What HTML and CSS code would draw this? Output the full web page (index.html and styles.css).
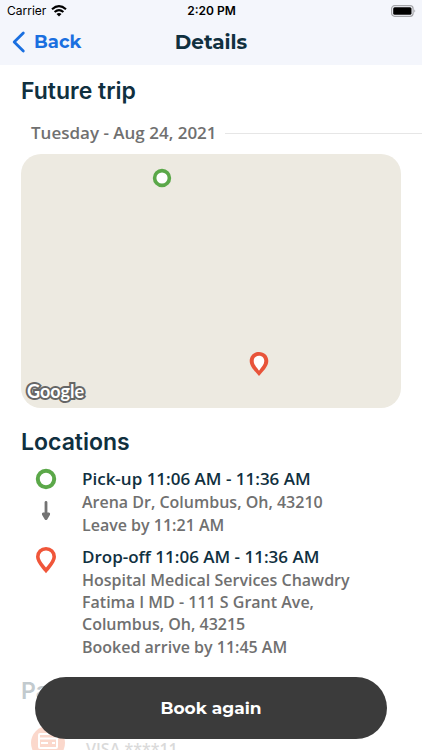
FILE: index.html
```html
<!DOCTYPE html>
<html lang="en">
<head>
<meta charset="utf-8">
<meta name="viewport" content="width=device-width, initial-scale=1">
<title>Details</title>
<link rel="stylesheet" href="styles.css">
</head>
<body>
<div class="app">
  <header class="top">
    <div class="status">
      <span class="carrier">Carrier
        <svg width="16" height="12" viewBox="0 0 16 12" aria-hidden="true"><path d="M1 4.3Q8-1.9 15 4.3M3.6 7Q8 3.2 12.4 7" fill="none" stroke="#000" stroke-width="2.1"/><path d="M5.5 9Q8 7 10.5 9L8 11.6Z"/></svg>
      </span>
      <time class="clock">2:20 PM</time>
      <svg class="battery" width="26" height="12" viewBox="0 0 26 12" aria-hidden="true"><rect x="1.600" y=".7" width="21.5" height="10.6" rx="3" fill="none" stroke="#a5a6aa" stroke-width="1.2"/><rect x="3.200" y="2.3" width="18.3" height="7.4" rx="1.5"/><path d="M24.500 4.2q1.5 1.8 0 3.6z" fill="#85868a"/></svg>
    </div>
    <nav class="nav">
      <a class="back" href="#">
        <svg width="14" height="22" viewBox="0 0 14 22" aria-hidden="true"><path d="M11.300 2L2.200 11l9.100 9" fill="none" stroke="#1a6fe0" stroke-width="2.8" stroke-linecap="round" stroke-linejoin="round"/></svg>
        Back</a>
      <h1 class="title">Details</h1>
    </nav>
  </header>

  <main class="content">
    <h2 class="heading">Future trip</h2>
    <div class="date">Tuesday - Aug 24, 2021</div>
    <div class="map" role="img" aria-label="Trip map">
      <svg class="pin pin-start" width="20" height="20" viewBox="0 0 20 20"><circle cx="10" cy="10" r="7.4" fill="#fff" stroke="#5ba849" stroke-width="3.6"/></svg>
      <svg class="pin pin-end" width="20" height="26" viewBox="0 0 20 26"><path d="M10 1C4.700 1 .7 4.800 .7 10c0 5.500 5 10 9.300 15 4.300-5 9.300-9.500 9.300-15C19.300 4.800 15.300 1 10 1Z" fill="#e8543a"/><path d="M10 4.800c-3.200 0-5.300 2.200-5.300 5.300 0 3.400 2.700 6 5.300 9.600 2.600-3.600 5.300-6.200 5.300-9.600 0-3.100-2.100-5.300-5.300-5.300Z" fill="#fff"/></svg>
      <span class="google">Google</span>
    </div>

    <h2 class="heading">Locations</h2>
    <ul class="stops">
      <li class="stop">
        <div class="marks">
          <svg width="22" height="22" viewBox="0 0 22 22" aria-hidden="true"><circle cx="11" cy="11" r="8.200" fill="#fff" stroke="#5ba849" stroke-width="4"/></svg>
          <svg width="10" height="20" viewBox="0 0 10 20" aria-hidden="true"><path d="M5 1.500v12" stroke="#737373" stroke-width="2.800" stroke-linecap="round"/><path d="M2 11.500h6q1.600.4 1 2.200L6.200 18.600q-1.200 1-2.400 0L1 13.700q-.6-1.800 1-2.200Z" fill="#737373"/></svg>
        </div>
        <div>
          <h3 class="stop-title">Pick-up 11:06 AM - 11:36 AM</h3>
          <p class="line">Arena Dr, Columbus, Oh, 43210</p>
          <p class="line">Leave by 11:21 AM</p>
        </div>
      </li>
      <li class="stop">
        <div class="marks">
          <svg width="22" height="28" viewBox="0 0 22 28" aria-hidden="true"><path d="M11 2.800c-4.700 0-8.200 3.300-8.200 8 0 5 4.400 8.800 8.200 13.600 3.800-4.800 8.200-8.600 8.200-13.600 0-4.700-3.500-8-8.200-8Z" fill="#fff" stroke="#f0563a" stroke-width="3.600"/></svg>
        </div>
        <div>
          <h3 class="stop-title">Drop-off 11:06 AM - 11:36 AM</h3>
          <p class="line">Hospital Medical Services Chawdry Fatima I MD - 111 S Grant Ave, Columbus, Oh, 43215</p>
          <p class="line">Booked arrive by 11:45 AM</p>
        </div>
      </li>
    </ul>

    <section class="payment">
      <h2 class="heading">Payment</h2>
      <div class="card">
        <svg width="34" height="34" viewBox="0 0 34 34" aria-hidden="true"><circle cx="17" cy="17" r="17" fill="#f0673a"/><rect x="8" y="8" width="18" height="14" rx="1" fill="none" stroke="#fff" stroke-width="2"/><path d="M8 12.500h18M10 17h7M21 17h3" stroke="#fff" stroke-width="2"/></svg>
        <span>VISA ****11</span>
      </div>
    </section>
  </main>

  <footer class="actions"><button class="book" type="button">Book again</button></footer>
</div>
</body>
</html>
```
FILE: styles.css
```css
* { box-sizing: border-box; }

body {
  margin: 0;
  background: #fff;
  color: #707070;
  font-family: "Open Sans", "Noto Sans", sans-serif;
}

h1, h2, h3, p, ul { margin: 0; padding: 0; }
svg { display: block; flex: none; }

.app {
  position: relative;
  display: flex;
  flex-direction: column;
  height: 100vh;
  overflow: hidden;
}

.top { background: #f4f6fc; padding-bottom: 3px; }

.status {
  display: grid;
  grid-template-columns: 1fr auto 1fr;
  align-items: center;
  height: 22px;
  padding: 0 6px 0 7px;
  color: #000;
  font: 500 12px/22px Inter, sans-serif;
}

.carrier { display: flex; align-items: center; gap: 5px; font-weight: 400; }
.clock { font-weight: 600; }
.battery { justify-self: end; }

.nav {
  display: grid;
  grid-template-columns: 1fr auto 1fr;
  align-items: center;
  height: 40px;
  padding: 0 12px;
  font-family: Montserrat, Inter, sans-serif;
}

.back {
  display: flex;
  align-items: center;
  gap: 8px;
  color: #1a6fe0;
  font-size: 18px;
  font-weight: 700;
  text-decoration: none;
}

.title { color: #10303f; font-size: 20px; font-weight: 700; }

.content {
  flex: 1;
  min-height: 0;
  padding: 8px 21px 0;
  overflow-y: auto;
  scrollbar-width: none;
}

.heading {
  color: #10303f;
  font: 600 23px/36px Inter, sans-serif;
}

.date {
  display: flex;
  align-items: center;
  gap: 8px;
  margin: 12px -21px 9px 10px;
  font-size: 17px;
  font-weight: 600;
  line-height: 24px;
}

.date::after { content: ""; flex: 1; height: 1px; background: #e6e6e6; }

.map {
  position: relative;
  height: 254px;
  margin-bottom: 16px;
  border-radius: 20px;
  background: #edeae1;
}

.pin { position: absolute; }
.pin-start { left: 131px; top: 14px; }
.pin-end { left: 228px; top: 197px; }

.google {
  position: absolute;
  left: 6px;
  bottom: 4px;
  color: #fff;
  font: 700 18px/26px Lato, sans-serif;
  -webkit-text-stroke: 4px #666;
  paint-order: stroke fill;
}

.stops { display: grid; gap: 10px; margin-top: 8px; list-style: none; }
.stop { display: grid; grid-template-columns: 50px 1fr; column-gap: 11px; }

.marks {
  display: flex;
  flex-direction: column;
  align-items: center;
  gap: 11px;
}

.stop-title {
  color: #10303f;
  font-size: 17px;
  font-weight: 600;
  line-height: 22px;
}

.line {
  max-width: 290px;
  margin-top: 1px;
  font-size: 16px;
  font-weight: 600;
  line-height: 22px;
}

.payment { margin-top: 15px; opacity: .25; }

.card {
  display: flex;
  align-items: end;
  gap: 21px;
  margin: 17px 10px 0;
  font-size: 16px;
  font-weight: 600;
}

.actions { position: absolute; right: 35px; bottom: 11px; left: 35px; }

.book {
  display: block;
  width: 100%;
  height: 62px;
  border: 0;
  border-radius: 31px;
  background: #3b3b3b;
  color: #fff;
  font: 700 17px/24px Montserrat, Inter, sans-serif;
}
```
